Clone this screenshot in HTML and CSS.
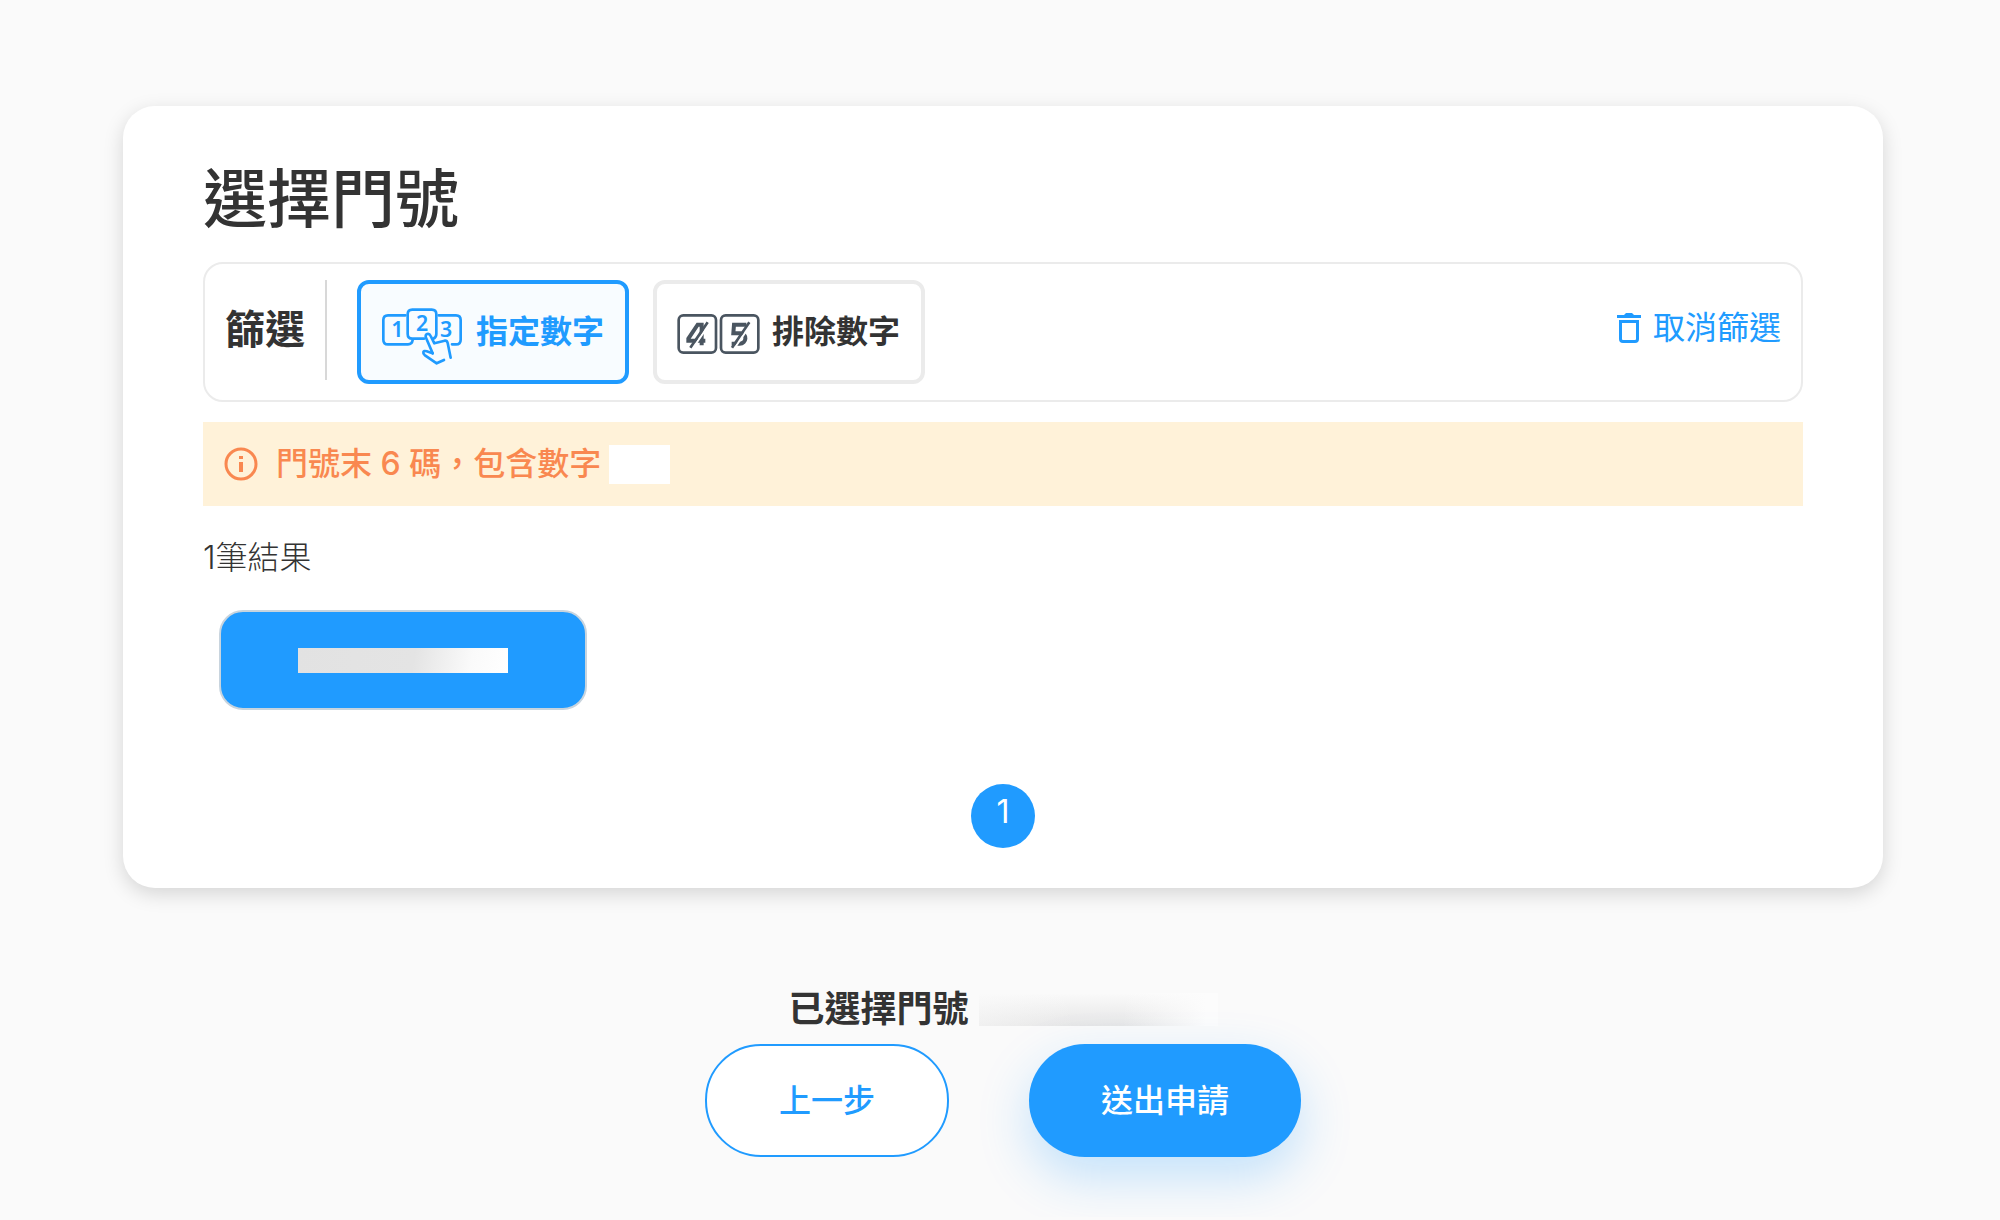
FILE: index.html
```
<!DOCTYPE html>
<html lang="zh-Hant">
<head>
    <meta charset="UTF-8">
    <meta name="viewport" content="width=device-width, initial-scale=1.0">
    <title>選擇門號</title>
    <link rel="stylesheet" href="styles.css">
</head>
<body>
    <main>
        <section class="card">
            <h1>選擇門號</h1>

            <!-- 篩選列 -->
            <div class="filter-bar">
                <h2 class="filter-label">篩選</h2>
                <button type="button" class="filter-btn active">
                    <svg class="filter-icon" viewBox="36 24 240 204" aria-hidden="true">
                        <g fill="none" stroke="currentColor" stroke-width="8" stroke-linecap="round" stroke-linejoin="round">
                            <path d="M106 76H54Q40 76 40 90V149Q40 163 54 163H114Q126 163 128 150"/>
                            <path d="M206 76H258Q272 76 272 90V149Q272 163 258 163H246"/>
                            <path d="M162 146H127Q113 146 113 132V73Q113 59 127 59H185Q199 59 199 73V132Q199 142 190 146"/>
                            <path d="M188 190L168 143C163 131 177 127 182 138L193 160L224 152Q231 151 233 159L242 203"/>
                            <path d="M188 190L170 184C158 180 157 190 165 196L200 220L222 210"/>
                        </g>
                        <g class="digits">
                            <text x="82" y="141">1</text>
                            <text x="156" y="122">2</text>
                            <text x="228" y="141">3</text>
                        </g>
                    </svg>
                    指定數字
                </button>
                <button type="button" class="filter-btn">
                    <svg class="filter-icon icon-exclude" viewBox="53 24 240 204" aria-hidden="true">
                        <g fill="none" stroke="currentColor" stroke-width="8">
                            <rect x="55" y="76" width="112" height="112" rx="14"/>
                            <rect x="182" y="76" width="112" height="112" rx="14"/>
                        </g>
                        <g fill="none" stroke="currentColor" stroke-width="12">
                            <path d="M135 152H84V146L112 104H124V166"/>
                            <path d="M258 104H221L219 130H240C262 130 259 161 238 161H214"/>
                        </g>
                        <path d="M148 101L97 175M273 101L222 175" stroke="#fff" stroke-width="6"/>
                        <path d="M142 97L90 173M267 97L215 173" stroke="currentColor" stroke-width="8"/>
                    </svg>
                    排除數字
                </button>
                <button type="button" class="clear-btn">
                    <svg class="icon-trash" viewBox="0 0 24 30" aria-hidden="true">
                        <path d="M0 2H7L9 0H15L17 2H24V5H0Z" fill="currentColor"/>
                        <path d="M3.500 8.500H20.500V26Q20.500 28.500 18 28.500H6Q3.500 28.500 3.500 26Z" fill="none" stroke="currentColor" stroke-width="3"/>
                    </svg>
                    取消篩選
                </button>
            </div>

            <div class="notice">
                <svg class="icon-info" viewBox="0 0 34 34" aria-hidden="true">
                    <circle cx="17" cy="17" r="15" fill="none" stroke="currentColor" stroke-width="3"/>
                    <path d="M17 15V25M17 9V12" stroke="currentColor" stroke-width="4"/>
                </svg>
                <span>門號末 6 碼，包含數字</span>
                <span class="mask mask-digits"></span>
            </div>

            <p class="result-count">1筆結果</p>

            <!-- 門號清單 -->
            <div class="number-list">
                <button type="button" class="number-btn" aria-label="門號">
                    <span class="mask mask-number"></span>
                </button>
            </div>

            <nav class="pagination" aria-label="分頁">
                <a href="#" class="page-link" aria-current="page">1</a>
            </nav>
        </section>

        <div class="selected">
            <span>已選擇門號</span>
            <span class="mask mask-selected"></span>
        </div>

        <div class="actions">
            <button type="button" class="btn btn-outline">上一步</button>
            <button type="button" class="btn btn-primary">送出申請</button>
        </div>
    </main>
</body>
</html>
```
FILE: styles.css
```
:root {
    --primary-color: #209bff;
    --text-dark: #333333;
    --border-color: #ebebeb;
    --notice-bg: #fff2d9;
    --notice-text: #f98850;
    --bg-color: #fafafa;
}

* {
    margin: 0;
    padding: 0;
    box-sizing: border-box;
}

body {
    font-family: Inter, 'Noto Sans CJK TC', sans-serif;
    background-color: var(--bg-color);
    color: var(--text-dark);
    font-size: 32px;
    line-height: 48px;
}

button {
    font: inherit;
    color: inherit;
    background: none;
    border: none;
    cursor: pointer;
}

svg {
    flex: none;
    overflow: visible;
}

main {
    padding: 106px 117px 60px 123px;
}

.card {
    background: white;
    border-radius: 32px;
    padding: 46px 80px 40px;
    box-shadow: 0 6px 20px rgba(0, 0, 0, 0.15);
}

h1 {
    font-size: 64px;
    font-weight: 500;
    line-height: 94px;
    margin-bottom: 16px;
}

.filter-bar {
    display: flex;
    align-items: flex-start;
    border: 2px solid var(--border-color);
    border-radius: 20px;
    padding: 16px 20px;
}

.filter-label {
    font-size: 40px;
    line-height: 100px;
    padding-right: 20px;
    border-right: 2px solid #d8d8d8;
    margin-right: 30px;
}

.filter-btn {
    display: flex;
    align-items: center;
    gap: 14px;
    height: 104px;
    padding: 0 21px;
    margin-right: 24px;
    border: 4px solid var(--border-color);
    border-radius: 12px;
    font-weight: 700;
}

.filter-btn.active {
    color: var(--primary-color);
    background: #f8fcff;
    border-color: var(--primary-color);
}

.filter-icon {
    width: 80px;
    height: 68px;
}

.icon-exclude {
    color: #4a5560;
}

.digits {
    font-family: 'Noto Sans', sans-serif;
    font-size: 64px;
    font-weight: 600;
    text-anchor: middle;
    fill: currentColor;
}

.clear-btn {
    display: flex;
    align-items: center;
    gap: 12px;
    height: 96px;
    margin-left: auto;
    color: var(--primary-color);
}

.icon-trash {
    width: 24px;
    height: 30px;
}

.notice {
    display: flex;
    align-items: center;
    margin-top: 20px;
    padding: 18px 21px;
    background: var(--notice-bg);
    color: var(--notice-text);
    font-weight: 500;
}

.icon-info {
    width: 34px;
    height: 34px;
    margin-right: 18px;
}

.mask {
    display: block;
    background: white;
}

.mask-digits {
    width: 61px;
    height: 39px;
    margin-left: 8px;
}

.result-count {
    margin-top: 28px;
    font-weight: 300;
}

.number-list {
    display: flex;
    padding: 28px 16px 0;
}

.number-btn {
    display: flex;
    align-items: center;
    justify-content: center;
    width: 368px;
    height: 100px;
    background: var(--primary-color);
    border: 2px solid #c8d4de;
    border-radius: 24px;
}

.mask-number {
    width: 210px;
    height: 25px;
    background: linear-gradient(100deg, #e2e2e2 0%, #e4e4e4 55%, #fafafa 82%, #ffffff 100%);
}

.pagination {
    display: flex;
    justify-content: center;
    margin-top: 74px;
}

.page-link {
    width: 64px;
    height: 64px;
    border-radius: 50%;
    background: var(--primary-color);
    color: white;
    line-height: 56px;
    text-align: center;
    text-decoration: none;
}

.selected {
    display: flex;
    align-items: center;
    justify-content: center;
    gap: 10px;
    margin-top: 97px;
    font-size: 36px;
    font-weight: 700;
}

.mask-selected {
    width: 239px;
    height: 33px;
    background: linear-gradient(90deg, rgba(250, 250, 250, 0.5) 0%, transparent 40%, transparent 60%, #fcfcfc 95%), linear-gradient(#fafafa, #e6e6e6);
}

.actions {
    display: flex;
    justify-content: center;
    gap: 80px;
    margin-top: 11px;
}

.btn {
    height: 113px;
    padding: 0 72px;
    border-radius: 56px;
    font-weight: 500;
}

.btn-outline {
    background: white;
    color: var(--primary-color);
    border: 2px solid var(--primary-color);
}

.btn-primary {
    background: var(--primary-color);
    color: white;
    box-shadow: 0 20px 50px rgba(32, 155, 255, 0.25);
}
```
